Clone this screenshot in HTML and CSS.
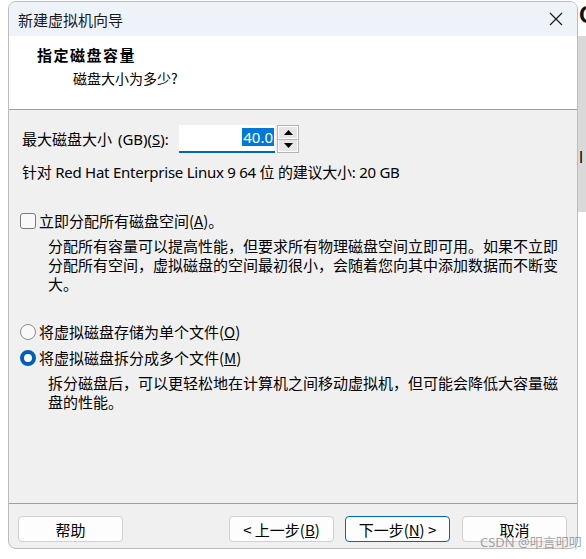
FILE: index.html
```html
<!DOCTYPE html>
<html lang="zh-CN">
<head>
<meta charset="utf-8">
<title>新建虚拟机向导</title>
<link rel="stylesheet" href="styles.css">
</head>
<body>
<div class="window">
  <div class="titlebar">
    <span class="title">新建虚拟机向导</span>
    <svg class="close" width="14" height="14" viewBox="0 0 14 14"><path d="M1 1L13 13M13 1L1 13" stroke="#1a1a1a" stroke-width="1.2" fill="none"/></svg>
  </div>
  <div class="header">
    <div class="h-title">指定磁盘容量</div>
    <div class="h-sub">磁盘大小为多少?</div>
  </div>
  <div class="content">
    <div class="size-row">
      <span class="size-label">最大磁盘大小 (GB)(<u>S</u>):</span>
      <div class="input"><span class="sel">40.0</span></div>
      <div class="spin">
        <div class="spin-btn"><svg width="9" height="5" viewBox="0 0 9 5"><path d="M0 5L4.5 0L9 5Z" fill="#000"/></svg></div>
        <div class="spin-btn"><svg width="9" height="5" viewBox="0 0 9 5"><path d="M0 0L4.5 5L9 0Z" fill="#000"/></svg></div>
      </div>
    </div>
    <div class="hint">针对 Red Hat Enterprise Linux 9 64 位 的建议大小: 20 GB</div>
    <div class="check-row">
      <span class="checkbox"></span>
      <span class="opt-label">立即分配所有磁盘空间(<u>A</u>)。</span>
    </div>
    <p class="desc">分配所有容量可以提高性能，但要求所有物理磁盘空间立即可用。如果不立即分配所有空间，虚拟磁盘的空间最初很小，会随着您向其中添加数据而不断变大。</p>
    <div class="radio-row first">
      <span class="radio"></span>
      <span class="opt-label">将虚拟磁盘存储为单个文件(<u>O</u>)</span>
    </div>
    <div class="radio-row second">
      <span class="radio on"></span>
      <span class="opt-label">将虚拟磁盘拆分成多个文件(<u>M</u>)</span>
    </div>
    <p class="desc">拆分磁盘后，可以更轻松地在计算机之间移动虚拟机，但可能会降低大容量磁盘的性能。</p>
  </div>
  <div class="footer">
    <button class="btn">帮助</button>
    <div class="spacer"></div>
    <button class="btn">&lt; 上一步(<u>B</u>)</button>
    <button class="btn focus">下一步(<u>N</u>) &gt;</button>
    <button class="btn last">取消</button>
  </div>
</div>
<div class="side">
  <div class="side-top"><span class="side-c">C</span></div>
  <div class="side-gray"><span class="side-l">l</span></div>
</div>
<div class="watermark">CSDN @叩言叩叩</div>
</body>
</html>
```
FILE: styles.css
```css
html, body {
  margin: 0;
  padding: 0;
  background: #ffffff;
}
body {
  display: flex;
  align-items: flex-start;
  width: 586px;
  height: 559px;
  overflow: hidden;
  position: relative;
  font-family: "Segoe UI", "Noto Sans", "Noto Sans CJK SC", sans-serif;
  font-size: 15px;
  color: #000;
}
.window {
  margin: 1px 0 0 8px;
  width: 568px;
  height: 546px;
  border: 1px solid #bcbcbc;
  border-radius: 8px;
  overflow: hidden;
  background: #f0f0f0;
  display: flex;
  flex-direction: column;
  flex-shrink: 0;
}
.titlebar {
  height: 34px;
  background: #eef3fa;
  display: flex;
  align-items: center;
  justify-content: space-between;
  padding: 0 14px 0 9px;
  flex-shrink: 0;
}
.title {
  font-family: "Noto Sans CJK SC", sans-serif;
  font-size: 15px;
  color: #1a1a1a;
}
.close { display: block; }
.header {
  height: 73px;
  background: #fff;
  border-bottom: 1px solid #a0a0a0;
  padding-left: 28px;
  flex-shrink: 0;
  font-family: "Noto Sans CJK SC", sans-serif;
}
.h-title {
  font-weight: bold;
  font-size: 15px;
  line-height: 20px;
  margin-top: 9px;
  letter-spacing: 1.5px;
}
.h-sub {
  font-size: 14px;
  line-height: 20px;
  margin-top: 3px;
  padding-left: 36px;
}
.content {
  flex: 1;
  padding: 15px 0 0 11px;
  line-height: 19px;
}
.size-row {
  display: flex;
  align-items: center;
  height: 28px;
  padding-left: 2px;
}
.size-label {
  width: 157px;
  word-spacing: 2px;
}
.input {
  width: 96px;
  height: 28px;
  box-sizing: border-box;
  background: #fff;
  border-bottom: 2px solid #0067c0;
  display: flex;
  justify-content: flex-end;
  align-items: flex-start;
  padding: 3px 1px 0 0;
}
.sel {
  background: #0078d7;
  color: #fff;
  line-height: 18px;
  padding: 0 1px;
}
.spin {
  margin-left: 2px;
  width: 22px;
  height: 28px;
  box-sizing: border-box;
  border: 1px solid #b4b4b4;
  display: flex;
  flex-direction: column;
}
.spin-btn {
  flex: 1;
  background: #e6e6e6;
  border: 1px solid #ffffff;
  display: flex;
  align-items: center;
  justify-content: center;
}
.spin-btn + .spin-btn { border-top: 1px solid #b4b4b4; }
.hint {
  margin-top: 10px;
  padding-left: 2px;
  letter-spacing: -0.25px;
}
.check-row, .radio-row {
  display: flex;
  align-items: center;
  height: 19px;
}
.check-row { margin-top: 29px; }
.checkbox {
  width: 14px;
  height: 14px;
  border: 1px solid #7a7a7a;
  border-radius: 3px;
  background: #f9f9f9;
  margin-right: 3px;
}
.opt-label {
  font-family: "Noto Sans CJK SC", sans-serif;
}
.desc {
  margin: 6px 18px 0 28px;
  font-family: "Noto Sans CJK SC", sans-serif;
  line-height: 19px;
}
.radio-row.first { margin-top: 29px; }
.radio-row.second { margin-top: 7px; }
.radio {
  width: 14px;
  height: 14px;
  border: 1px solid #8a8a8a;
  border-radius: 50%;
  background: #f9f9f9;
  margin-right: 3px;
  box-sizing: content-box;
}
.radio.on {
  background: #fff;
  border: 4px solid #005fb8;
  width: 8px;
  height: 8px;
}
.footer {
  height: 45px;
  border-top: 1px solid #a0a0a0;
  display: flex;
  align-items: flex-start;
  padding: 12px 10px 0 9px;
  box-sizing: border-box;
  flex-shrink: 0;
}
.spacer { flex: 1; }
.btn {
  width: 105px;
  height: 26px;
  background: #fdfdfd;
  border: 1px solid #d0d0d0;
  border-radius: 4px;
  font-family: "Noto Sans CJK SC", sans-serif;
  font-size: 15px;
  color: #000;
  padding: 0;
  margin-left: 11px;
}
.btn:first-child { margin-left: 0; }
.btn.last { margin-left: 12px; }
.btn.focus { border-color: #0067c0; }
.side {
  width: 8px;
  flex-shrink: 0;
  display: flex;
  flex-direction: column;
  overflow: hidden;
}
.side-top {
  height: 36px;
  overflow: hidden;
}
.side-c {
  display: block;
  font-family: "Liberation Sans", sans-serif;
  font-weight: bold;
  font-size: 24px;
  line-height: 30px;
  margin-left: 1px;
  color: #111;
}
.side-gray {
  height: 176px;
  background: #d9d9d9;
  position: relative;
}
.side-l {
  position: absolute;
  left: 1px;
  top: 112px;
  font-size: 16px;
  line-height: 18px;
}
.watermark {
  position: absolute;
  left: 480px;
  top: 532px;
  font-family: "Noto Sans", "Noto Sans CJK SC", sans-serif;
  font-size: 13px;
  color: rgba(90, 90, 90, 0.55);
  white-space: nowrap;
}
```
